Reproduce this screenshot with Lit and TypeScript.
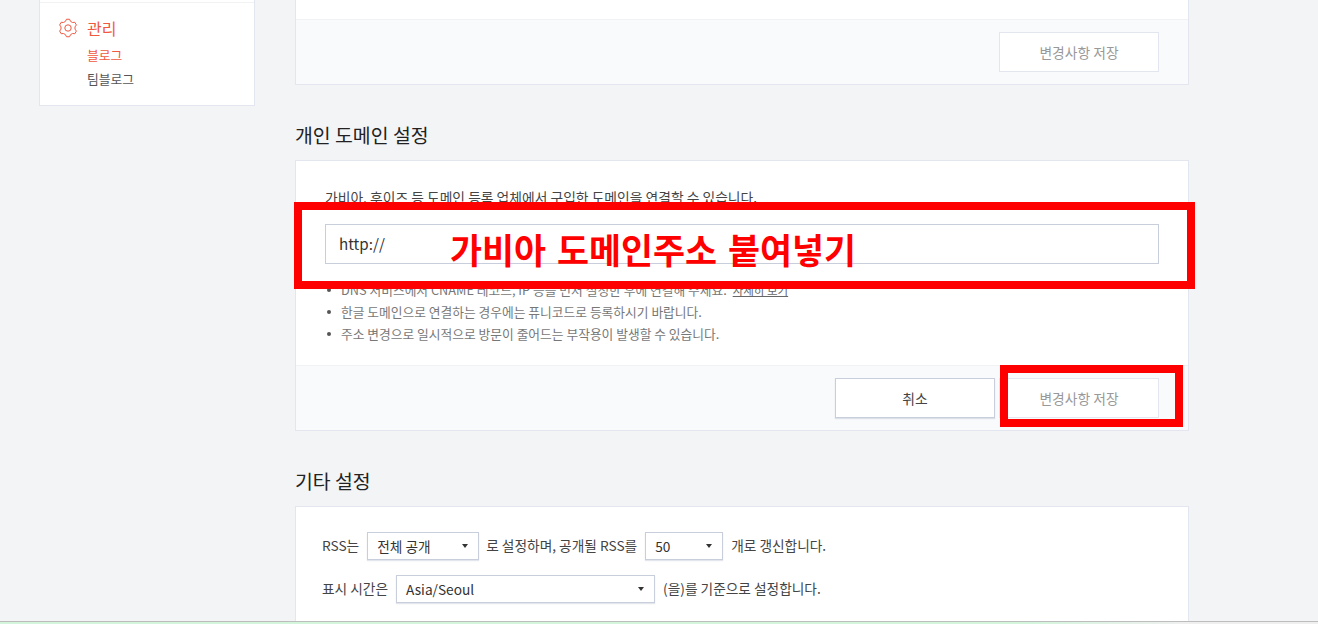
import { LitElement, html, css } from "lit";
import { customElement } from "lit/decorators.js";

const gearPoints = (() => {
  const pts: string[] = [];
  for (let i = 0; i < 6; i++) {
    const a = -90 + 60 * i;
    for (const [d, r] of [[-21, 7.1], [-10, 8.9], [10, 8.9], [21, 7.1]]) {
      const t = ((a + d) * Math.PI) / 180;
      pts.push(`${(9 + r * Math.cos(t)).toFixed(2)},${(9 + r * Math.sin(t)).toFixed(2)}`);
    }
  }
  return pts.join(" ");
})();

@customElement("app-root")
export class AppRoot extends LitElement {
  static styles = css`
    :host {
      display: block;
      position: relative;
      width: 1318px;
      height: 624px;
      overflow: hidden;
      background: #f3f4f6;
      font-family: "Noto Sans CJK KR", "Noto Sans", sans-serif;
      color: #333;
    }
    .page {
      display: flex;
      align-items: flex-start;
      gap: 40px;
      padding-left: 39px;
    }
    .side {
      width: 216px;
      height: 106px;
      box-sizing: border-box;
      background: #fff;
      border: solid #e3e6ee;
      border-width: 0 1px 1px;
      padding-top: 2px;
      flex: none;
    }
    .side-in {
      border-top: 1px solid #f1f2f4;
      display: flex;
      gap: 10px;
      padding: 14px 0 0 19px;
    }
    .gear { width: 18px; height: 18px; margin-top: 2px; flex: none; overflow: visible; }
    .side-t { font-size: 16px; line-height: 22px; color: #f0583f; }
    .side-l { font-size: 12.8px; line-height: 18px; margin-top: 6px; color: #555; }
    .side-l.on { color: #f0583f; margin-top: 7px; }
    .main { width: 894px; flex: none; }
    .card {
      box-sizing: border-box;
      background: #fff;
      border: 1px solid #e3e6ee;
    }
    .first { height: 85px; border-top: 0; }
    .first .sp { height: 19px; }
    .foot {
      background: #f9fafc;
      border-top: 1px solid #f1f2f4;
      display: flex;
      justify-content: flex-end;
      gap: 4px;
      padding: 12px 29px 12px 0;
    }
    .btn {
      width: 160px;
      height: 40px;
      box-sizing: border-box;
      background: #fff;
      border: 1px solid #c8cedb;
      box-shadow: 0 1px 1px rgba(200, 206, 219, .6);
      font-size: 13.8px;
      display: flex;
      align-items: center;
      justify-content: center;
      color: #444;
    }
    .btn.off { border-color: #e3e6ee; box-shadow: none; color: #999; }
    h2 {
      margin: 0;
      font-weight: 400;
      font-size: 19.4px;
      line-height: 26px;
      color: #222;
    }
    .h1, .h2 { margin: 37px 0 12px; }
    .dom { height: 271px; }
    .dom .body { height: 204px; box-sizing: border-box; padding: 26px 29px 0; }
    .desc { font-size: 13.8px; line-height: 20px; color: #444; }
    .input {
      height: 40px;
      box-sizing: border-box;
      margin-top: 17px;
      border: 1px solid #c8cedb;
      padding-left: 13px;
      font-size: 15.2px;
      line-height: 36px;
      color: #333;
    }
    ul { list-style: none; margin: 15px 0 0; padding: 0; }
    li {
      position: relative;
      padding-left: 16px;
      font-size: 12.75px;
      line-height: 22px;
      color: #777;
    }
    li::before {
      content: "";
      position: absolute;
      left: 2px;
      top: 9px;
      width: 4px;
      height: 4px;
      border-radius: 50%;
      background: #555;
    }
    li a { color: #666; text-decoration: underline; margin-left: 3px; font-size: 11.5px; }
    .etc { height: 200px; padding: 25px 26px 0; font-size: 13.7px; color: #444; }
    .row { display: flex; align-items: center; height: 28px; }
    .row + .row { margin-top: 15px; }
    .t { margin-top: -2px; }
    .sel {
      box-sizing: border-box;
      height: 28px;
      background: #fff;
      border: 1px solid #c8cedb;
      box-shadow: 0 1px 1px rgba(200, 206, 219, .5);
      display: flex;
      align-items: center;
      justify-content: space-between;
      padding: 0 10.5px 0 9px;
      font-size: 13.7px;
      color: #333;
      margin: 0 8px;
    }
    .arrow { width: 0; height: 0; border: 3.5px solid transparent; border-top: 4px solid #333; border-bottom: 0; }
    .w1 { width: 112px; margin-right: 7px; }
    .w2 { width: 78px; }
    .w3 { width: 259px; }
    .mark { position: absolute; border: 8px solid #f00; box-sizing: border-box; }
    .m1 { left: 294px; top: 202px; width: 901px; height: 87px; }
    .m2 { left: 1000px; top: 365px; width: 183px; height: 62px; }
    .note {
      position: absolute;
      left: 450px;
      top: 226px;
      font-size: 34.8px;
      line-height: 46px;
      font-weight: 700;
      color: #f00;
      word-spacing: 3px;
      white-space: nowrap;
    }
    .strip {
      position: absolute;
      left: 0;
      right: 0;
      top: 621px;
      height: 3px;
      background: linear-gradient(90deg, #d3f5dc 0, #d3f5dc 78%, #efefef 90%);
      border-top: 1px solid #bdbdbd;
      box-sizing: border-box;
    }
  `;

  render() {
    return html`
      <div class="page">
        <aside class="side">
          <div class="side-in">
            <svg class="gear" viewBox="0 0 18 18" fill="none" stroke="#f0583f" stroke-width="1" stroke-linejoin="round">
              <circle cx="9" cy="9" r="3.2"></circle>
              <polygon points=${gearPoints}></polygon>
            </svg>
            <div>
              <div class="side-t">관리</div>
              <div class="side-l on">블로그</div>
              <div class="side-l">팀블로그</div>
            </div>
          </div>
        </aside>
        <main class="main">
          <section class="card first">
            <div class="sp"></div>
            <div class="foot"><div class="btn off">변경사항 저장</div></div>
          </section>
          <h2 class="h1">개인 도메인 설정</h2>
          <section class="card dom">
            <div class="body">
              <div class="desc">가비아, 후이즈 등 도메인 등록 업체에서 구입한 도메인을 연결할 수 있습니다.</div>
              <div class="input">http://</div>
              <ul>
                <li>DNS 서비스에서 CNAME 레코드, IP 등을 먼저 설정한 후에 연결해 주세요. <a>자세히 보기</a></li>
                <li>한글 도메인으로 연결하는 경우에는 퓨니코드로 등록하시기 바랍니다.</li>
                <li>주소 변경으로 일시적으로 방문이 줄어드는 부작용이 발생할 수 있습니다.</li>
              </ul>
            </div>
            <div class="foot">
              <div class="btn">취소</div>
              <div class="btn off">변경사항 저장</div>
            </div>
          </section>
          <h2 class="h2">기타 설정</h2>
          <section class="card etc">
            <div class="row">
              <span class="t">RSS는</span>
              <div class="sel w1"><span>전체 공개</span><i class="arrow"></i></div>
              <span class="t">로 설정하며, 공개될 RSS를</span>
              <div class="sel w2"><span>50</span><i class="arrow"></i></div>
              <span class="t">개로 갱신합니다.</span>
            </div>
            <div class="row">
              <span class="t">표시 시간은</span>
              <div class="sel w3"><span>Asia/Seoul</span><i class="arrow"></i></div>
              <span class="t">(을)를 기준으로 설정합니다.</span>
            </div>
          </section>
        </main>
      </div>
      <div class="mark m1"></div>
      <div class="mark m2"></div>
      <div class="note">가비아 도메인주소 붙여넣기</div>
      <div class="strip"></div>
    `;
  }
}
